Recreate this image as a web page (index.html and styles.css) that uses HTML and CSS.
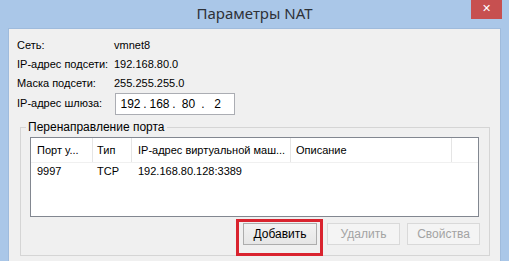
FILE: index.html
```html
<!DOCTYPE html>
<html lang="ru">
<head>
<meta charset="utf-8">
<title>Параметры NAT</title>
<link rel="stylesheet" href="styles.css">
</head>
<body>
<div class="window">
  <div class="titlebar">
    <span></span>
    <span class="title">Параметры NAT</span>
    <span class="close">✕</span>
  </div>
  <div class="client">
    <div class="info">
      <span class="lbl">Сеть:</span><span class="val">vmnet8</span>
      <span class="lbl">IP-адрес подсети:</span><span class="val">192.168.80.0</span>
      <span class="lbl">Маска подсети:</span><span class="val">255.255.255.0</span>
      <span class="lbl">IP-адрес шлюза:</span>
      <div class="ipbox">
        <span class="oct">192</span><span class="dot">.</span><span class="oct">168</span><span class="dot">.</span><span class="oct">80</span><span class="dot">.</span><span class="oct">2</span>
      </div>
    </div>
    <div class="group">
      <span class="legend">Перенаправление порта</span>
      <div class="listview">
        <div class="row header">
          <span class="c1">Порт у...</span><span class="c2">Тип</span><span class="c3">IP-адрес виртуальной маш...</span><span class="c4">Описание</span><span class="c5"></span>
        </div>
        <div class="row item">
          <span class="c1">9997</span><span class="c2">TCP</span><span class="c3">192.168.80.128:3389</span><span class="c4"></span><span class="c5"></span>
        </div>
      </div>
      <div class="buttons">
        <div class="mark-wrap">
          <button class="btn">Добавить</button>
          <span class="redmark"></span>
        </div>
        <button class="btn disabled del">Удалить</button>
        <button class="btn disabled">Свойства</button>
      </div>
    </div>
  </div>
</div>
</body>
</html>
```
FILE: styles.css
```css
html, body {
  margin: 0;
  padding: 0;
}
body {
  width: 509px;
  height: 261px;
  overflow: hidden;
  font-family: "Liberation Sans", Arial, sans-serif;
  font-size: 11px;
  color: #000;
}
.window {
  width: 509px;
  height: 261px;
  background: #aac7e8;
  display: flex;
  flex-direction: column;
}
.titlebar {
  height: 28px;
  display: grid;
  grid-template-columns: 1fr auto 1fr;
  align-items: start;
}
.title {
  font-family: "Noto Sans", "Open Sans", sans-serif;
  font-size: 15px;
  color: #2e3238;
  line-height: 28px;
  margin-top: -1px;
}
.close {
  justify-self: end;
  width: 31px;
  height: 19px;
  margin-right: 7px;
  background: #c75050;
  color: #fff;
  font-size: 11px;
  font-weight: bold;
  line-height: 18px;
  text-align: center;
  font-family: "DejaVu Sans", sans-serif;
}
.client {
  flex: 1;
  margin: 0 8px 0 8px;
  background: #f0f0f0;
  border-left: 1px solid #9fbbdc;
  border-right: 1px solid #9fbbdc;
  border-top: 1px solid #9fbbdc;
  padding: 6px 10px 0 8px;
}
.info {
  display: grid;
  grid-template-columns: 97px auto;
  grid-template-rows: 19px 19px 19px 22px;
  align-items: center;
  white-space: nowrap;
}
.info .ipbox {
  margin-top: 1px;
}
.ipbox {
  width: 115px;
  height: 20px;
  border: 1px solid #abadb3;
  background: #fff;
  display: flex;
  align-items: center;
  padding-left: 3px;
  box-sizing: content-box;
  font-size: 12px;
  justify-self: start;
  margin-left: 1px;
}
.oct {
  width: 23px;
  text-align: center;
}
.dot {
  width: 6px;
  text-align: center;
}
.group {
  margin: 13px 0 0 3px;
  border: 1px solid #d5d5d5;
  padding: 0 10px 10px 9px;
  display: flex;
  flex-direction: column;
}
.legend {
  align-self: flex-start;
  margin: -8px 0 0 -4px;
  padding: 0 2px;
  line-height: 15px;
  background: #f0f0f0;
  font-size: 12px;
}
.listview {
  margin-top: 2px;
  height: 78px;
  border: 1px solid #828790;
  background: #fff;
}
.row {
  display: flex;
}
.row span {
  white-space: nowrap;
  overflow: hidden;
  box-sizing: border-box;
}
.header {
  height: 24px;
  border-bottom: 1px solid #f0f0f0;
  align-items: center;
}
.header span {
  height: 24px;
  line-height: 24px;
  border-right: 1px solid #e5e5e5;
}
.header .c5 {
  border-right: none;
}
.item {
  height: 17px;
  line-height: 17px;
}
.c1 { width: 62px; padding-left: 6px; }
.c2 { width: 39px; padding-left: 4px; }
.c3 { width: 159px; padding-left: 6px; }
.c4 { width: 161px; padding-left: 5px; }
.c5 { flex: 1; }
.buttons {
  display: flex;
  justify-content: flex-end;
  margin-top: 6px;
  margin-right: -1px;
}
.mark-wrap {
  position: relative;
  margin-right: 10px;
}
.btn {
  width: 73px;
  height: 22px;
  font-family: "Liberation Sans", Arial, sans-serif;
  font-size: 12px;
  color: #000;
  border: 1px solid #adadad;
  background: linear-gradient(#f2f2f2, #e6e6e6);
  padding: 0;
  margin: 0;
  display: block;
}
.btn.del {
  margin-right: 7px;
}
.mark-wrap .btn {
  width: 74px;
}
.btn.disabled {
  color: #a3a3a3;
  border-color: #d9d9d9;
  background: #f4f4f4;
}
.redmark {
  position: absolute;
  left: -7px;
  top: -4px;
  right: -6px;
  bottom: -11px;
  border: 3px solid #d9232e;
}
```
